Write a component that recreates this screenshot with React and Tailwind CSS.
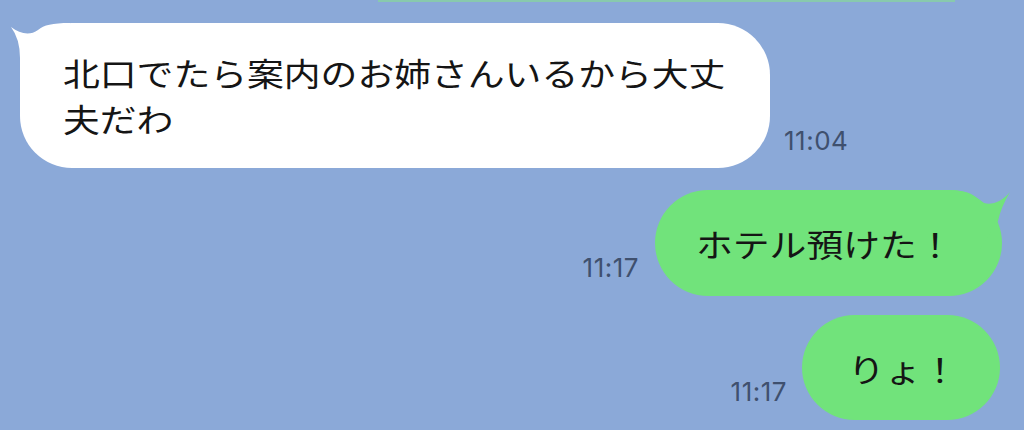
import React from 'react';

const jp = { fontFamily: '"Noto Sans CJK JP", "Noto Sans", sans-serif' };

function TailLeft() {
  return (
    <svg className="absolute left-[-12px] top-[-1px]" width="70" height="60" viewBox="0 0 70 60">
      <path
        d="M3 5 C12 12 22 14 30 8 C36 3 44 1 62 1 L62 60 L12 60 L12 36 Q12 17 3 5 Z"
        fill="#ffffff"
      />
    </svg>
  );
}

function TailRight() {
  return (
    <svg className="absolute right-[-10px] top-[-1px]" width="72" height="60" viewBox="0 0 72 60">
      <path
        d="M5 1 C25 1 33 4 40 12 C48 18 61 14 70 3 Q61 18 58 32 L40 60 L5 60 Z"
        fill="#71e37b"
      />
    </svg>
  );
}

function Time({ children, className }) {
  return (
    <span
      className={`text-[26px] leading-[30px] tracking-[0.5px] text-[#3f506e] ${className}`}
      style={{ fontFamily: 'Inter, "Liberation Sans", sans-serif' }}
    >
      {children}
    </span>
  );
}

export default function App() {
  return (
    <div className="w-[1024px] h-[430px] overflow-hidden bg-[#8ba9d8] flex flex-col" style={jp}>
      <div className="ml-[378px] w-[577px] h-[2px] bg-[#88c9ad]" />

      <div className="mt-[21px] ml-[20px] flex items-end">
        <div className="relative w-[750px] h-[145px] rounded-[52px] bg-white pl-[43px] pt-[26px]">
          <TailLeft />
          <p className="relative origin-left scale-x-[1.15] whitespace-nowrap text-[32px] leading-[46px] text-[#151515]">
            北口でたら案内のお姉さんいるから大丈
            <br />
            夫だわ
          </p>
        </div>
        <Time className="ml-[14px] mb-[12px]">11:04</Time>
      </div>

      <div className="mt-[22px] pr-[22px] flex items-end justify-end">
        <Time className="mr-[16px] mb-[13px]">11:17</Time>
        <div className="relative w-[347px] h-[106px] rounded-full bg-[#71e37b] pl-[41px] flex items-center">
          <TailRight />
          <span className="relative inline-block origin-left scale-x-[1.15] whitespace-nowrap text-[32px] leading-[46px] text-[#151515]">
            ホテル預けた！
          </span>
        </div>
      </div>

      <div className="mt-[19px] pr-[24px] flex items-end justify-end">
        <Time className="mr-[15px] mb-[13px]">11:17</Time>
        <div className="w-[198px] h-[105px] rounded-full bg-[#71e37b] pl-[46px] flex items-center">
          <span className="inline-block origin-left scale-x-[1.15] whitespace-nowrap text-[32px] leading-[46px] text-[#151515]">
            りょ！
          </span>
        </div>
      </div>
    </div>
  );
}
